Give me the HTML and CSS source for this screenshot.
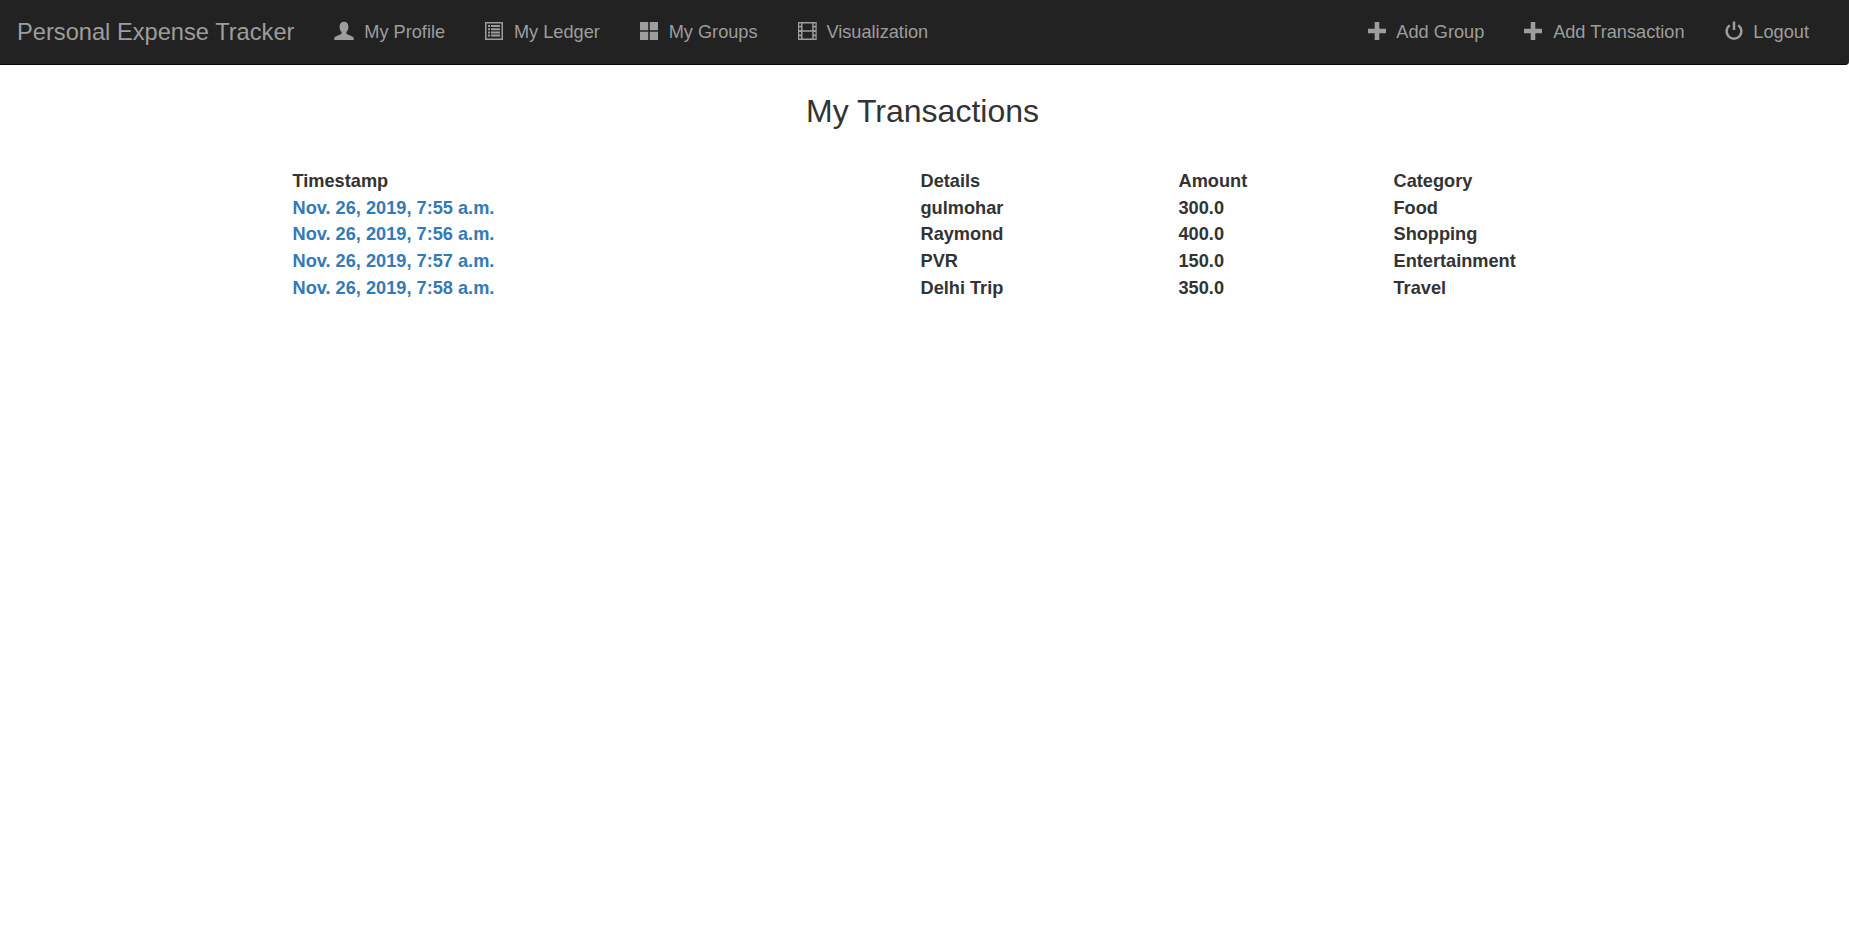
FILE: index.html
```html
<!DOCTYPE html>
<html lang="en">
<head>
<meta charset="utf-8">
<title>Personal Expense Tracker</title>
<link rel="stylesheet" href="styles.css">
</head>
<body>
<nav class="navbar">
  <a class="brand" href="#">Personal Expense Tracker</a>
  <ul class="nav">
    <li><a href="#"><svg class="icon" viewBox="0 0 18 18"><path d="M9-.3C6-.3 4.600 1.900 4.600 5.200c0 2.100.9 3.800 2 4.900v1c0 1-1.100 1.400-2.600 1.900C1.500 13.900-.7 14.700-.7 16.300V18h19.400v-1.700c0-1.600-2.200-2.400-4.700-3.300-1.500-.5-2.600-.9-2.600-1.900v-1c1.100-1.100 2-2.800 2-4.900C13.400 1.900 12-.3 9-.3z"/></svg>My Profile</a></li>
    <li><a href="#"><svg class="icon" viewBox="0 0 18 18"><path fill-rule="evenodd" d="M0 0h18v18H0zM1.500 1.500v15h15v-15zM3 3h2v2H3zM6 3h9v2H6zM3 6.200h2v2H3zM6 6.200h9v2H6zM3 9.400h2v2H3zM6 9.400h9v2H6zM3 12.600h2v2H3zM6 12.600h9v2H6z"/></svg>My Ledger</a></li>
    <li><a href="#"><svg class="icon" viewBox="0 0 18 18"><path d="M0 0h8.200v8.200H0zM9.800 0H18v8.200H9.800zM0 9.800h8.200V18H0zM9.800 9.800H18V18H9.800z"/></svg>My Groups</a></li>
    <li><a href="#"><svg class="icon" viewBox="0 0 18 18"><path fill-rule="evenodd" d="M0 0h18.700v18H0zM1.200 1.500v2.300H3V1.500zM1.200 5.600v2.300H3V5.600zM1.200 10.100v2.300H3v-2.300zM1.200 14.200v2.300H3v-2.300zM15.700 1.500v2.300h1.800V1.500zM15.700 5.600v2.300h1.800V5.600zM15.700 10.100v2.300h1.800v-2.300zM15.700 14.200v2.300h1.800v-2.300zM4.500 1.500v6.700h9.700V1.500zM4.500 9.800v6.700h9.700V9.800z"/></svg>Visualization</a></li>
  </ul>
  <ul class="nav nav-right">
    <li><a href="#"><svg class="icon" viewBox="0 0 18 18"><path d="M6.700 0h4.600v6.700H18v4.600h-6.700V18H6.700v-6.700H0V6.700h6.700z"/></svg>Add Group</a></li>
    <li><a href="#"><svg class="icon" viewBox="0 0 18 18"><path d="M6.700 0h4.600v6.700H18v4.600h-6.700V18H6.700v-6.700H0V6.700h6.700z"/></svg>Add Transaction</a></li>
    <li><a href="#"><svg class="icon icon-line" viewBox="0 0 18 18"><path d="M4.750 3.240A7.400 7.400 0 1 0 13.250 3.240M9-.5V8"/></svg>Logout</a></li>
  </ul>
</nav>
<main class="content">
  <h3 class="title">My Transactions</h3>
  <table class="ledger">
    <tr><th>Timestamp</th><th>Details</th><th>Amount</th><th>Category</th></tr>
    <tr><td><a href="#">Nov. 26, 2019, 7:55 a.m.</a></td><td>gulmohar</td><td>300.0</td><td>Food</td></tr>
    <tr><td><a href="#">Nov. 26, 2019, 7:56 a.m.</a></td><td>Raymond</td><td>400.0</td><td>Shopping</td></tr>
    <tr><td><a href="#">Nov. 26, 2019, 7:57 a.m.</a></td><td>PVR</td><td>150.0</td><td>Entertainment</td></tr>
    <tr><td><a href="#">Nov. 26, 2019, 7:58 a.m.</a></td><td>Delhi Trip</td><td>350.0</td><td>Travel</td></tr>
  </table>
</main>
</body>
</html>
```
FILE: styles.css
```css
* { box-sizing: border-box; }
html, body { margin: 0; padding: 0; }
body {
  font-family: "Liberation Sans", Arial, sans-serif;
  font-size: 18.2px;
  line-height: 1.42857143;
  color: #333;
  background: #fff;
}
a { text-decoration: none; }
.navbar {
  display: flex;
  align-items: stretch;
  height: 65px;
  padding: 0 20px 0 17px;
  background: #222;
  border-bottom: 1px solid #080808;
  border-radius: 0 0 4px 0;
}
.brand {
  display: block;
  padding-top: 20px;
  font-size: 23.66px;
  line-height: 24px;
  color: #9d9d9d;
}
.nav {
  display: flex;
  list-style: none;
  margin: 0 0 0 21px;
  padding: 0;
}
.nav-right { margin-left: auto; }
.nav a {
  display: flex;
  align-items: center;
  height: 64px;
  padding: 0 20px 1px;
  color: #9d9d9d;
}
.icon {
  width: 18px;
  height: 18px;
  margin: 0 10.8px 1px 0;
  fill: #9d9d9d;
  flex: none;
  overflow: visible;
}
.icon-line {
  fill: none;
  stroke: #9d9d9d;
  stroke-width: 2.5;
}
.content { width: 1294px; margin: 0 auto; }
.title {
  margin: 29px 0 38.8px;
  padding-right: 4px;
  font-size: 32px;
  font-weight: 400;
  line-height: 1.1;
  text-align: center;
  color: #333;
}
.ledger {
  width: 100%;
  border-collapse: collapse;
  font-weight: 700;
  table-layout: fixed;
}
.ledger th, .ledger td { padding: 0 0 0 15px; text-align: left; font-weight: 700; line-height: 26.75px; }
.ledger th:nth-child(1) { width: 628px; }
.ledger th:nth-child(2) { width: 258px; }
.ledger th:nth-child(3) { width: 215px; }
.ledger a { color: #337ab7; }
```
